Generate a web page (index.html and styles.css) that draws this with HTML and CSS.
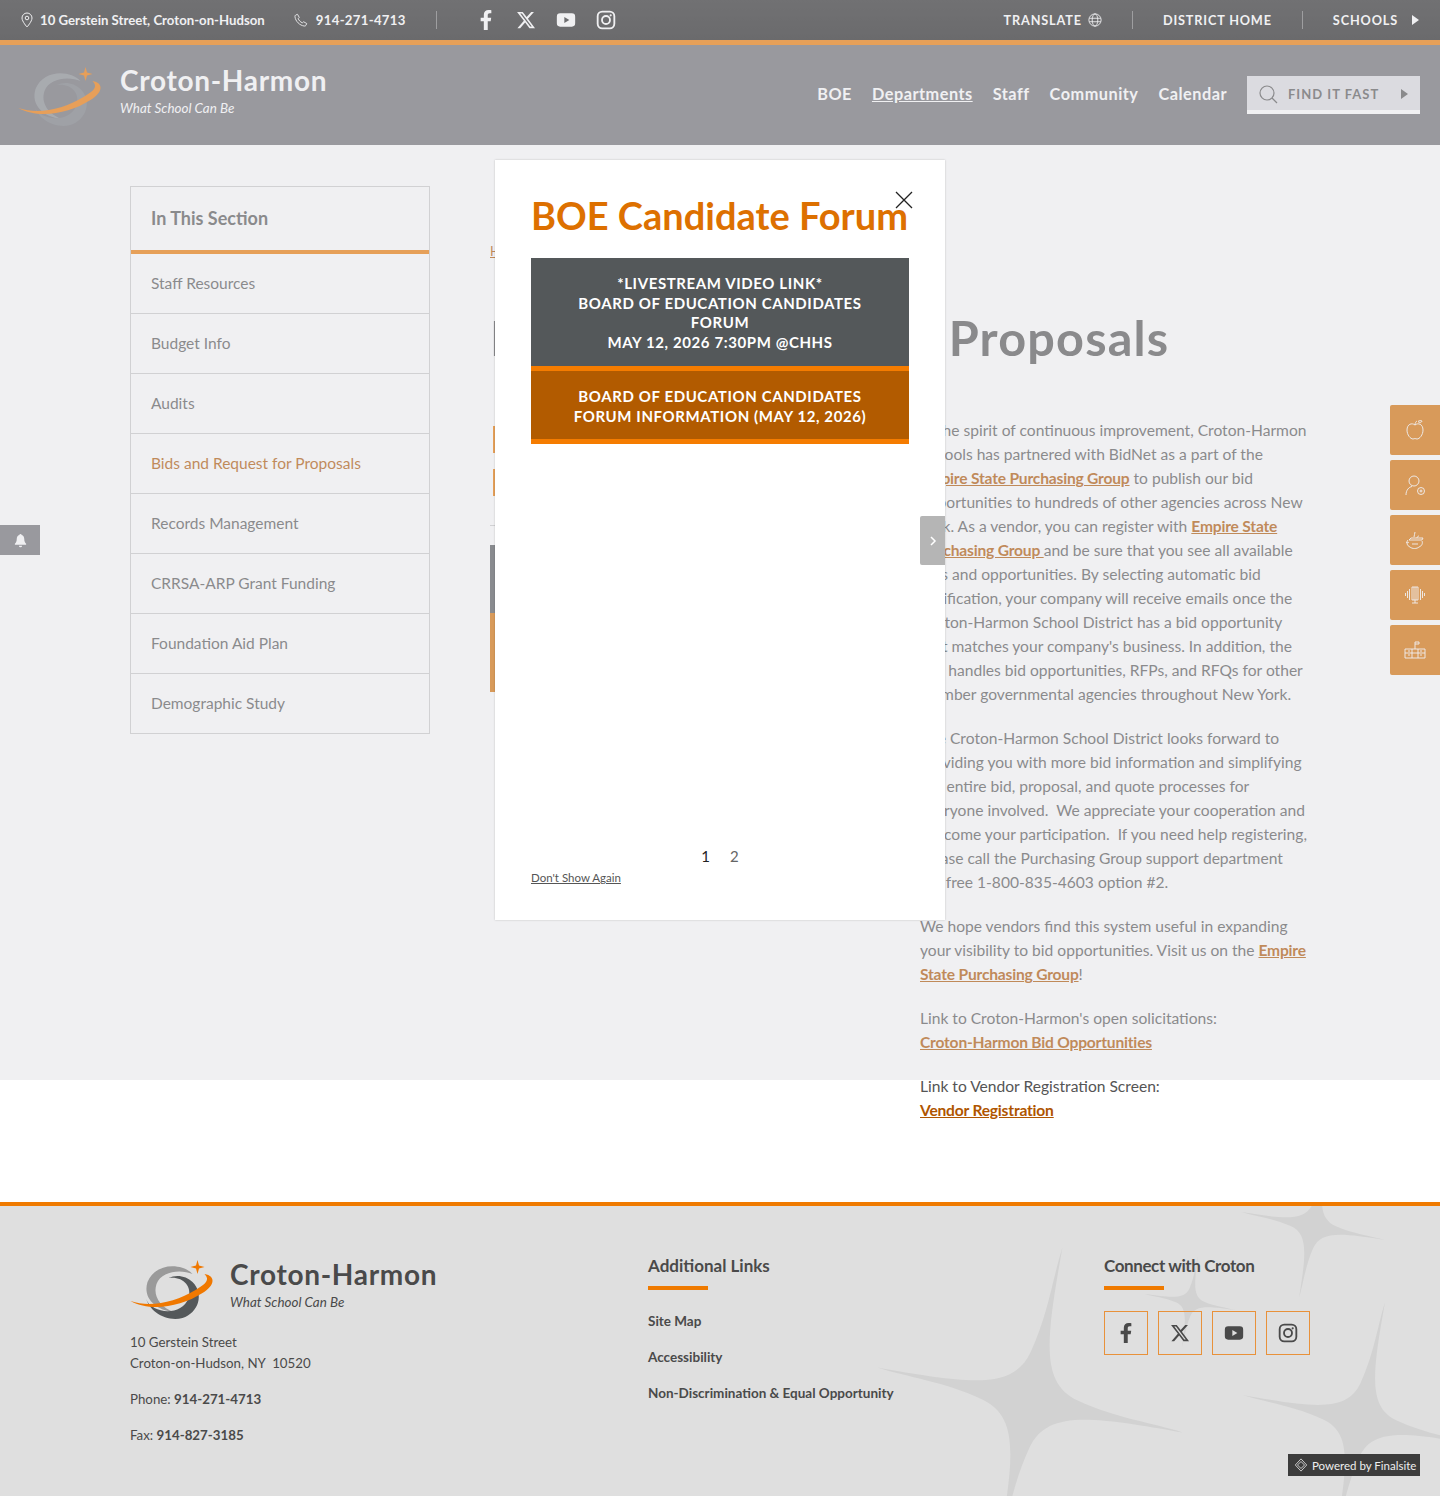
FILE: index.html
```html
<!DOCTYPE html>
<html lang="en">
<head>
  <meta charset="UTF-8" />
  <meta name="viewport" content="width=device-width, initial-scale=1" />
  <title>Bids and Request for Proposals | Croton-Harmon</title>
  <link rel="stylesheet" href="styles.css">
</head>
<body>

<!-- shared icons -->
<svg class="defs" width="0" height="0">
  <symbol id="logo" viewBox="0 0 86 62">
    <path class="logo-ring" d="M62 14C52 3 25 2 17 22C12 38 25 50 43 52C30 47 22 36 26 24C31 11 50 9 62 14Z"/>
    <path class="logo-arc" d="M38 18C52 16 62 26 58 38C53 52 35 54 24 48C19 45 16 42 15 36C18 52 36 62 52 58C68 53 74 34 62 22C56 16 46 14 38 18Z"/>
    <path class="logo-swoosh" d="M0 41C20 48 45 42 65 30C75 24 80 20 74 14C86 16 84 26 72 33C50 47 20 52 0 41Z"/>
    <path class="logo-swoosh" d="M67 0L68.500 5.500L74 7L68.500 8.500L67 14L65.500 8.500L60 7L65.500 5.500Z"/>
  </symbol>
  <symbol id="i-fb" viewBox="0 0 320 512">
    <path fill="currentColor" d="M279.140 288l14.220-92.660h-88.910v-60.130c0-25.350 12.420-50.060 52.240-50.060h40.420V6.260S260.430 0 225.360 0c-73.220 0-121.080 44.380-121.080 124.720v70.620H22.890V288h81.390v224h100.170V288z"/>
  </symbol>
  <symbol id="i-x" viewBox="0 0 24 24">
    <path fill="currentColor" d="M18.244 2.250h3.308l-7.227 8.260 8.502 11.240H16.170l-5.214-6.817L4.990 21.750H1.680l7.730-8.835L1.254 2.250H8.080l4.713 6.231zm-1.161 17.520h1.833L7.084 4.126H5.117z"/>
  </symbol>
  <symbol id="i-yt" viewBox="0 0 24 24">
    <path fill="currentColor" fill-rule="evenodd" d="M5 4h14a4 4 0 0 1 4 4v8a4 4 0 0 1-4 4H5a4 4 0 0 1-4-4V8a4 4 0 0 1 4-4zM10 8.500v7l6-3.500z"/>
  </symbol>
  <symbol id="i-ig" viewBox="0 0 24 24">
    <rect x="2" y="2" width="20" height="20" rx="5.500" fill="none" stroke="currentColor" stroke-width="2.200"/>
    <circle cx="12" cy="12" r="4.800" fill="none" stroke="currentColor" stroke-width="2.200"/>
    <circle cx="17.600" cy="6.400" r="1.300" fill="currentColor"/>
  </symbol>
</svg>

<div class="topbar">
  <div class="top-left">
    <span class="top-item">
      <svg class="top-icon" viewBox="0 0 14 16"><path d="M7 1a5 5 0 0 0-5 5c0 3.500 5 9 5 9s5-5.500 5-9a5 5 0 0 0-5-5z"/><circle cx="7" cy="6" r="1.800"/></svg>
      10 Gerstein Street, Croton-on-Hudson
    </span>
    <span class="top-item top-phone">
      <svg class="top-icon" viewBox="0 0 16 16"><path d="M4 1.500L6 5 4.800 6.500c.8 2 2.500 3.800 4.700 4.700L11 10l3.500 2-.8 2c-.4.800-1.200 1-2 .9C6.500 14.200 1.800 9.500 1.100 4.300c-.1-.8.100-1.600.9-2z"/></svg>
      914-271-4713
    </span>
    <span class="top-divider"></span>
    <div class="top-social">
      <svg><use href="#i-fb"/></svg>
      <svg><use href="#i-x"/></svg>
      <svg><use href="#i-yt"/></svg>
      <svg><use href="#i-ig"/></svg>
    </div>
  </div>
  <div class="top-right">
    <span class="top-link">TRANSLATE
      <svg class="top-icon globe" viewBox="0 0 16 16"><circle cx="8" cy="8" r="7"/><ellipse cx="8" cy="8" rx="3.200" ry="7"/><path d="M1.500 6h13M1.500 10h13"/></svg>
    </span>
    <span class="top-divider"></span>
    <span class="top-link">DISTRICT HOME</span>
    <span class="top-divider"></span>
    <span class="top-link">SCHOOLS <i class="arrow"></i></span>
  </div>
</div>

<header class="site-header">
  <div class="brand">
    <svg class="brand-logo head-logo"><use href="#logo"/></svg>
    <div class="head-text">
      <div class="brand-name">Croton-Harmon</div>
      <div class="brand-tag">What School Can Be</div>
    </div>
  </div>
  <nav class="main-nav">
    <a>BOE</a>
    <a class="current">Departments</a>
    <a>Staff</a>
    <a>Community</a>
    <a>Calendar</a>
    <div class="find-fast">
      <svg viewBox="0 0 20 20"><circle cx="9" cy="9" r="7"/><path d="M14 14l5 5"/></svg>
      <span>FIND IT FAST</span>
      <i class="arrow"></i>
    </div>
  </nav>
</header>

<div class="page-body">
  <aside class="side-nav">
    <div class="side-title">In This Section</div>
    <a>Staff Resources</a>
    <a>Budget Info</a>
    <a>Audits</a>
    <a class="active">Bids and Request for Proposals</a>
    <a>Records Management</a>
    <a>CRRSA-ARP Grant Funding</a>
    <a>Foundation Aid Plan</a>
    <a>Demographic Study</a>
  </aside>

  <main class="content">
    <div class="crumbs"><a>Home</a></div>
    <h1>Bids and Request for Proposals</h1>
    <div class="columns">
      <div class="col-left">
        <div class="doc-link"></div>
        <div class="doc-link"></div>
        <hr>
        <div class="promo-top"></div>
        <div class="promo-bottom"></div>
      </div>
      <div class="col-right">
        <p>In the spirit of continuous improvement, Croton-Harmon<br>
        Schools has partnered with BidNet as a part of the<br>
        <a>Empire State Purchasing Group</a> to publish our bid<br>
        opportunities to hundreds of other agencies across New<br>
        York. As a vendor, you can register with <a>Empire State<br>
        Purchasing Group </a>and be sure that you see all available<br>
        bids and opportunities. By selecting automatic bid<br>
        notification, your company will receive emails once the<br>
        Croton-Harmon School District has a bid opportunity<br>
        that matches your company's business. In addition, the<br>
        site handles bid opportunities, RFPs, and RFQs for other<br>
        member governmental agencies throughout New York.</p>
        <p>The Croton-Harmon School District looks forward to<br>
        providing you with more bid information and simplifying<br>
        the entire bid, proposal, and quote processes for<br>
        everyone involved.&nbsp; We appreciate your cooperation and<br>
        welcome your participation.&nbsp; If you need help registering,<br>
        please call the Purchasing Group support department<br>
        toll free 1-800-835-4603 option #2.</p>
        <p>We hope vendors find this system useful in expanding<br>
        your visibility to bid opportunities. Visit us on the <a>Empire<br>
        State Purchasing Group</a>!</p>
        <p>Link to Croton-Harmon's open solicitations:<br>
        <a>Croton-Harmon Bid Opportunities</a></p>
        <p>Link to Vendor Registration Screen:<br>
        <a>Vendor Registration</a></p>
      </div>
    </div>
  </main>
</div>

<footer class="site-footer">
  <svg class="footer-stars" viewBox="0 0 1440 290">
    <defs>
      <path id="star" d="M0 -100C2 -40 4 -12 30 -6S80 -2 100 0C40 2 12 4 6 30S2 80 0 100C-2 40 -4 12 -30 6S-80 2 -100 0C-40 -2 -12 -4 -6 -30S-2 -80 0 -100Z"/>
    </defs>
    <use href="#star" transform="translate(1030 194) rotate(12) scale(1.560)"/>
    <use href="#star" transform="translate(1313 20) rotate(11) scale(.730)"/>
    <use href="#star" transform="translate(1190 96) rotate(10) scale(.460)"/>
    <use href="#star" transform="translate(1360 214) rotate(12) scale(1.200)"/>
  </svg>
  <div class="footer-inner">
    <div class="footer-contact">
      <div class="brand footer-brand">
        <svg class="brand-logo"><use href="#logo"/></svg>
        <div class="foot-text">
          <div class="brand-name">Croton-Harmon</div>
          <div class="brand-tag">What School Can Be</div>
        </div>
      </div>
      <p>10 Gerstein Street<br>Croton-on-Hudson, NY&nbsp; 10520</p>
      <p>Phone: <b>914-271-4713</b></p>
      <p>Fax: <b>914-827-3185</b></p>
    </div>
    <div class="footer-links">
      <h3>Additional Links</h3>
      <a>Site Map</a>
      <a>Accessibility</a>
      <a>Non-Discrimination &amp; Equal Opportunity</a>
    </div>
    <div class="footer-connect">
      <h3>Connect with Croton</h3>
      <div class="social-boxes">
        <a><svg class="ico-fb"><use href="#i-fb"/></svg></a>
        <a><svg><use href="#i-x"/></svg></a>
        <a><svg><use href="#i-yt"/></svg></a>
        <a><svg><use href="#i-ig"/></svg></a>
      </div>
    </div>
  </div>
  <div class="powered">
    <svg viewBox="0 0 16 16"><path d="M8 1l6.500 7L8 15 1.500 8z"/><path d="M4 8l4-4 4 4-4 4z"/></svg>
    Powered by Finalsite
  </div>
</footer>

<!-- floating tabs -->
<div class="alert-tab">
  <svg viewBox="0 0 16 16"><path d="M8 1a1.200 1.200 0 0 0-1.200 1.200C4.800 2.800 4 4.500 4 6.500c0 3-1 4-2 5v1h12v-1c-1-1-2-2-2-5 0-2-.8-3.700-2.800-4.300A1.200 1.200 0 0 0 8 1zM6.300 13.500a1.700 1.700 0 0 0 3.400 0z"/></svg>
</div>
<div class="quick-tabs">
  <a><svg viewBox="0 0 24 24"><path d="M12 7C9 4.500 4 6 4 12c0 5 3.500 9 6 9 1 0 1.300-.5 2-.5s1 .5 2 .5c2.500 0 6-4 6-9 0-6-5-7.500-8-5z"/><path d="M12 7c0-2 1-3.500 2-4M15 3.500c1-1 3-1 4-.5-.5 1.500-2 2.500-4 .5z"/></svg></a>
  <a><svg viewBox="0 0 24 24"><circle cx="11" cy="8" r="5"/><path d="M3 22c0-5 3-8 6-8.500M13 13.500"/><circle cx="18" cy="18" r="3.500"/><path d="M18 16.500v3M16.500 18h3"/></svg></a>
  <a><svg viewBox="0 0 24 24"><path d="M5 12c-2 2-1 6 2 7 2 2 7 2 9 0 3-1 4-4 3-6"/><path d="M6 12h13l1-2H8z"/><path d="M11 9c0-2 1-3 1-5M14 10c0-1 1-2 2-2"/><path d="M3 14c1 1 2 1 3 0M9 16h6"/></svg></a>
  <a><svg viewBox="0 0 24 24"><path d="M9 4h6v13H9zM12 17v3M9 20h6"/><path d="M11 4v13M13 4v13M6.500 6v11M4.500 8v7M2.500 10v3M17.500 6v11M19.500 8v7M21.500 10v3"/></svg></a>
  <a><svg viewBox="0 0 24 24"><path d="M2 11h20v9H2zM2 15h20M9 11v9M15 11v9M12 4v7M12 4h4v2h-4M5 13h2M17 13h2M5 17h2M17 17h2"/></svg></a>
</div>

<!-- popup, sits over the dimmed first screen -->
<div class="overlay"></div>
<div class="modal">
  <svg class="modal-close" viewBox="0 0 18 18"><path d="M1 1l16 16M17 1L1 17"/></svg>
  <h2>BOE Candidate Forum</h2>
  <a class="forum-btn gray">*LIVESTREAM VIDEO LINK*<br>BOARD OF EDUCATION CANDIDATES<br>FORUM<br>MAY 12, 2026 7:30PM @CHHS</a>
  <a class="forum-btn orange">BOARD OF EDUCATION CANDIDATES<br>FORUM INFORMATION (MAY 12, 2026)</a>
  <div class="modal-foot">
    <div class="pager"><span class="on">1</span><span>2</span></div>
    <a class="dont-show">Don't Show Again</a>
  </div>
  <div class="modal-next">
    <svg viewBox="0 0 8 12"><path d="M2 2l4 4-4 4"/></svg>
  </div>
</div>

</body>
</html>
```

FILE: styles.css
```css
body {
  margin: 0;
  position: relative;
  height: 1496px;
  overflow: hidden;
  background: #fff;
  color: #555;
  font-family: Lato, sans-serif;
  font-size: 16px;
}

a { color: inherit; }

.defs { position: absolute; }

/* top bar */
.topbar {
  display: flex;
  justify-content: space-between;
  align-items: center;
  height: 40px;
  padding: 0 21px 0 20px;
  background: linear-gradient(#2c2c2c, #212121);
  border-bottom: 5px solid #ef7a00;
  color: #fff;
  font-size: 13.200px;
  font-weight: 700;
}

.top-left, .top-right {
  display: flex;
  align-items: center;
}

.top-item {
  display: flex;
  align-items: center;
  gap: 6px;
}

.top-phone {
  gap: 8px;
  margin-left: 29px;
  letter-spacing: .3px;
}

.top-icon {
  width: 14px;
  height: 16px;
  fill: none;
  stroke: #fff;
  stroke-width: 1;
}

.top-divider {
  width: 1px;
  height: 18px;
  background: #777;
  margin: 0 30px;
}

.top-social {
  display: flex;
  gap: 20px;
  margin-left: 9px;
}

.top-social svg {
  width: 20px;
  height: 20px;
  color: #fff;
}

.top-link {
  display: flex;
  align-items: center;
  gap: 6px;
  font-size: 12.700px;
  letter-spacing: .85px;
}

.arrow {
  display: inline-block;
  width: 0;
  height: 0;
  margin-left: 8px;
  border-left: 7px solid #fff;
  border-top: 5px solid transparent;
  border-bottom: 5px solid transparent;
}

/* header */
.site-header {
  display: flex;
  justify-content: space-between;
  align-items: center;
  height: 100px;
  padding: 0 20px 0 18px;
  background: #6e6e74;
  color: #fff;
}

.brand {
  display: flex;
  align-items: center;
  gap: 15px;
}

.brand-logo {
  width: 87px;
  height: 62px;
  --ring: #9a9a9a;
  --arc: #54585a;
  --swoosh: #f07800;
}

.head-logo {
  margin-top: 6px;
  --ring: #888c90;
  --arc: #787c80;
  --swoosh: #f07800;
}

.head-text { margin-bottom: 10px; }

.foot-text { margin-bottom: 13px; }

.logo-ring { fill: var(--ring); }
.logo-arc { fill: var(--arc); }
.logo-swoosh { fill: var(--swoosh); }

.brand-name {
  font-size: 28px;
  font-weight: 700;
  letter-spacing: .7px;
  line-height: 36px;
}

.brand-tag {
  font-size: 13.400px;
  font-style: italic;
  line-height: 20px;
}

.main-nav {
  display: flex;
  align-items: center;
  gap: 20px;
  font-size: 16.300px;
  font-weight: 700;
  letter-spacing: .5px;
}

.main-nav a { margin-bottom: 3px; }

.main-nav .current { text-decoration: underline; }

.find-fast {
  display: flex;
  align-items: center;
  box-sizing: border-box;
  width: 173px;
  height: 38px;
  padding: 2px 12px 0 11px;
  background: #dddde2;
  border-bottom: 4px solid #fff;
  color: #555;
  font-size: 13px;
  letter-spacing: 1px;
}

.find-fast svg {
  width: 20px;
  height: 20px;
  margin-right: 10px;
  fill: none;
  stroke: #555;
  stroke-width: 1.200;
}

.find-fast .arrow {
  margin-left: auto;
  border-left-color: #555;
}

/* page body */
.page-body {
  display: flex;
  gap: 60px;
  box-sizing: border-box;
  width: 1180px;
  height: 1057px;
  margin: 0 auto;
  padding-top: 41px;
}

.side-nav {
  box-sizing: border-box;
  width: 300px;
  height: 548px;
  flex: none;
  border: 1px solid #ccc;
}

.side-title {
  box-sizing: border-box;
  height: 67px;
  padding: 20px 20px 0;
  border-bottom: 4px solid #ef7a00;
  font-size: 18px;
  font-weight: 700;
}

.side-nav a {
  display: block;
  box-sizing: border-box;
  height: 60px;
  padding: 19px 20px 0;
  border-bottom: 1px solid #ccc;
  font-size: 15.500px;
  line-height: 20px;
}

.side-nav a:last-child { border-bottom: 0; }

.side-nav a.active { color: #af5500; }

.content { flex: 1; min-width: 0; }

.crumbs {
  height: 58px;
  padding-top: 57px;
  font-size: 13px;
  color: #af5500;
}

.crumbs a { text-decoration: underline; }

h1 {
  margin: 4px 0 0;
  height: 106px;
  font-size: 48.600px;
  font-weight: 700;
  letter-spacing: 1.200px;
  word-spacing: -6px;
  line-height: 64px;
  white-space: nowrap;
}

.columns {
  display: flex;
  gap: 30px;
}

.col-left {
  width: 400px;
  flex: none;
  padding-top: 15px;
}

.doc-link {
  box-sizing: border-box;
  height: 27px;
  margin: 0 0 16px 3px;
  border-left: 2px solid #ef7a00;
}

.col-left hr {
  margin: 29px 0 19px;
  border: 0;
  border-top: 1px solid #ccc;
}

.promo-top { height: 68px; background: #54585a; }
.promo-bottom { height: 79px; background: #d77003; }

.col-right {
  width: 390px;
  padding-top: 7px;
  font-size: 15.600px;
  line-height: 24px;
  white-space: nowrap;
}

.col-right p { margin: 0 0 20px; }

.col-right a {
  color: #af5500;
  font-weight: 700;
  letter-spacing: -.2px;
  text-decoration: underline;
}

/* footer */
.site-footer {
  position: relative;
  height: 290px;
  overflow: hidden;
  background: #dfdfdf;
  border-top: 4px solid #ef7a00;
  color: #4a4a4a;
  font-size: 13.300px;
}

.footer-stars {
  position: absolute;
  top: 0;
  left: 0;
  width: 1440px;
  height: 290px;
  fill: #d2d2d2;
}

.footer-inner {
  position: relative;
  display: flex;
  width: 1180px;
  margin: 0 auto;
  padding-top: 50px;
}

.footer-contact { width: 518px; }

.footer-brand { gap: 13px; margin-bottom: 7px; }

.footer-contact p {
  margin: 0 0 15px;
  line-height: 21px;
}

.footer-links { width: 456px; }

.site-footer h3 {
  position: relative;
  margin: 0 0 36px;
  font-size: 17px;
  font-weight: 700;
  line-height: 20px;
}

.footer-connect h3 { letter-spacing: -.4px; }

.site-footer h3::after {
  content: "";
  position: absolute;
  left: 0;
  top: 30px;
  width: 60px;
  height: 4px;
  background: #ef7a00;
}

.footer-links a {
  display: block;
  margin-bottom: 18px;
  font-size: 13.500px;
  font-weight: 700;
  line-height: 18px;
}

.social-boxes {
  display: flex;
  gap: 10px;
  margin-top: -1px;
}

.social-boxes a {
  display: flex;
  align-items: center;
  justify-content: center;
  box-sizing: border-box;
  width: 44px;
  height: 44px;
  border: 1px solid #e8913a;
}

.social-boxes svg {
  width: 20px;
  height: 20px;
  color: #4a4a4a;
}

.powered {
  position: absolute;
  right: 20px;
  top: 248px;
  display: flex;
  align-items: center;
  gap: 4px;
  box-sizing: border-box;
  width: 132px;
  height: 22px;
  padding-left: 6px;
  background: #3c3c3c;
  color: #eee;
  font-size: 11.500px;
  font-weight: 400;
  white-space: nowrap;
}

.powered svg {
  width: 14px;
  height: 14px;
  flex: none;
  fill: none;
  stroke: #ddd;
  stroke-width: 1;
}

/* floating tabs */
.alert-tab {
  position: absolute;
  left: 0;
  top: 525px;
  display: flex;
  align-items: center;
  justify-content: center;
  width: 40px;
  height: 30px;
  background: #6e6e74;
}

.alert-tab svg { width: 15px; height: 15px; fill: #fff; }

.quick-tabs {
  position: absolute;
  right: 0;
  top: 405px;
  display: flex;
  flex-direction: column;
  gap: 5px;
}

.quick-tabs a {
  display: flex;
  align-items: center;
  justify-content: center;
  width: 50px;
  height: 50px;
  background: #d77003;
  border-radius: 2px 0 0 2px;
}

.quick-tabs svg {
  width: 24px;
  height: 24px;
  fill: none;
  stroke: #fff;
  stroke-width: .9;
}

/* popup */
.overlay {
  position: absolute;
  top: 0;
  left: 0;
  width: 100%;
  height: 1080px;
  background: rgba(217, 217, 222, 0.4);
}

.modal {
  position: absolute;
  top: 160px;
  left: 495px;
  box-sizing: border-box;
  width: 450px;
  height: 760px;
  padding: 28px 36px 0;
  background: #fff;
  box-shadow: 0 0 2px rgba(0, 0, 0, 0.2);
}

.modal h2 {
  margin: 0 0 16px;
  color: #dd7000;
  font-size: 38px;
  font-weight: 700;
  line-height: 54px;
  white-space: nowrap;
}

.modal-close {
  position: absolute;
  top: 31px;
  right: 32px;
  width: 18px;
  height: 18px;
  fill: none;
  stroke: #222;
  stroke-width: 1.300;
}

.forum-btn {
  display: block;
  color: #fff;
  font-size: 15px;
  font-weight: 700;
  letter-spacing: .6px;
  line-height: 19.500px;
  text-align: center;
}

.forum-btn.gray {
  padding: 16px 0 14px;
  background: #54585a;
}

.forum-btn.orange {
  padding: 16px 0 13px;
  background: #b25b00;
  border-top: 5px solid #f57c00;
  border-bottom: 5px solid #f57c00;
}

.modal-foot {
  position: absolute;
  left: 36px;
  right: 36px;
  top: 686px;
}

.pager {
  display: flex;
  justify-content: center;
  gap: 20px;
  color: #666;
  font-size: 15px;
  line-height: 20px;
}

.pager .on { color: #222; }

.dont-show {
  display: block;
  margin-top: 3px;
  color: #555;
  font-size: 11.500px;
  line-height: 18px;
  text-decoration: underline;
}

.modal-next {
  position: absolute;
  top: 356px;
  right: 0;
  display: flex;
  align-items: center;
  justify-content: center;
  width: 25px;
  height: 49px;
  border-radius: 2px 0 0 2px;
  background: #b5b5b5;
}

.modal-next svg {
  width: 8px;
  height: 12px;
  fill: none;
  stroke: #fff;
  stroke-width: 1.500;
}
```
